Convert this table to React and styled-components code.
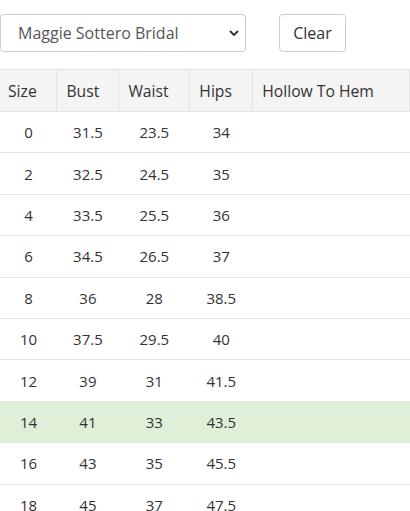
import React, { useState } from "react";
import styled, { createGlobalStyle } from "styled-components";

const GlobalStyle = createGlobalStyle`
  body {
    margin: 0;
    background: #fff;
    font-family: "Open Sans", "Liberation Sans", sans-serif;
    color: #333;
  }
`;

const Page = styled.div`
  width: 410px;
  padding-top: 14px;
`;

const Toolbar = styled.div`
  display: flex;
  align-items: center;
  gap: 33px;
  margin-bottom: 17px;
`;

const SelectWrap = styled.div`
  position: relative;
  width: 246px;
  height: 38px;
`;

const Select = styled.select`
  appearance: none;
  width: 100%;
  height: 100%;
  box-sizing: border-box;
  border: 1px solid #ccc;
  border-radius: 4px;
  background: #fff;
  padding: 0 30px 0 17px;
  font-family: inherit;
  font-size: 16px;
  color: #555;
  outline: none;
`;

const Chevron = styled.svg`
  position: absolute;
  right: 6px;
  top: 14px;
  pointer-events: none;
`;

const Button = styled.button`
  width: 67px;
  height: 38px;
  box-sizing: border-box;
  border: 1px solid #ccc;
  border-radius: 4px;
  background: #fff;
  font-family: inherit;
  font-size: 16px;
  color: #333;
  cursor: pointer;
`;

const Table = styled.table`
  width: 410px;
  border-collapse: collapse;
  font-size: 15px;
`;

const Th = styled.th`
  background: #f4f4f4;
  border: 1px solid #e3e3e3;
  border-left: ${(p) => (p.$first ? "none" : "1px solid #e3e3e3")};
  height: 42px;
  padding: 0 0 0 ${(p) => (p.$first ? "8px" : "9px")};
  text-align: left;
  font-weight: 400;
  font-size: 15.7px;
  color: #333;
  width: ${(p) => p.$w}px;
  box-sizing: border-box;
`;

const Row = styled.tr`
  height: 41.4px;
  background: ${(p) => (p.$active ? "#dfefd8" : "#fff")};
`;

const Td = styled.td`
  text-align: center;
  padding: 0;
  border-bottom: 1px solid ${(p) => (p.$active ? "#dfefd8" : "#e3e3e3")};
  color: #333;
`;

const columns = [
  { label: "Size", w: 57 },
  { label: "Bust", w: 62 },
  { label: "Waist", w: 71 },
  { label: "Hips", w: 63 },
  { label: "Hollow To Hem", w: 157 },
];

const rows = [
  ["0", "31.5", "23.5", "34"],
  ["2", "32.5", "24.5", "35"],
  ["4", "33.5", "25.5", "36"],
  ["6", "34.5", "26.5", "37"],
  ["8", "36", "28", "38.5"],
  ["10", "37.5", "29.5", "40"],
  ["12", "39", "31", "41.5"],
  ["14", "41", "33", "43.5"],
  ["16", "43", "35", "45.5"],
  ["18", "45", "37", "47.5"],
];

const App = () => {
  const [brand, setBrand] = useState("maggie");

  return (
    <Page>
      <GlobalStyle />
      <Toolbar>
        <SelectWrap>
          <Select value={brand} onChange={(e) => setBrand(e.target.value)}>
            <option value="maggie">Maggie Sottero Bridal</option>
          </Select>
          <Chevron width="12" height="10" viewBox="0 0 12 10">
            <path d="M2 3 L6 7 L10 3" fill="none" stroke="#333" strokeWidth="1.8" />
          </Chevron>
        </SelectWrap>
        <Button>Clear</Button>
      </Toolbar>
      <Table>
        <thead>
          <tr>
            {columns.map((c, i) => (
              <Th key={c.label} $w={c.w} $first={i === 0}>
                {c.label}
              </Th>
            ))}
          </tr>
        </thead>
        <tbody>
          {rows.map((r) => {
            const active = r[0] === "14";
            return (
              <Row key={r[0]} $active={active}>
                {r.map((v, i) => (
                  <Td key={i} $active={active}>
                    {v}
                  </Td>
                ))}
                <Td $active={active} />
              </Row>
            );
          })}
        </tbody>
      </Table>
    </Page>
  );
};

export default App;
